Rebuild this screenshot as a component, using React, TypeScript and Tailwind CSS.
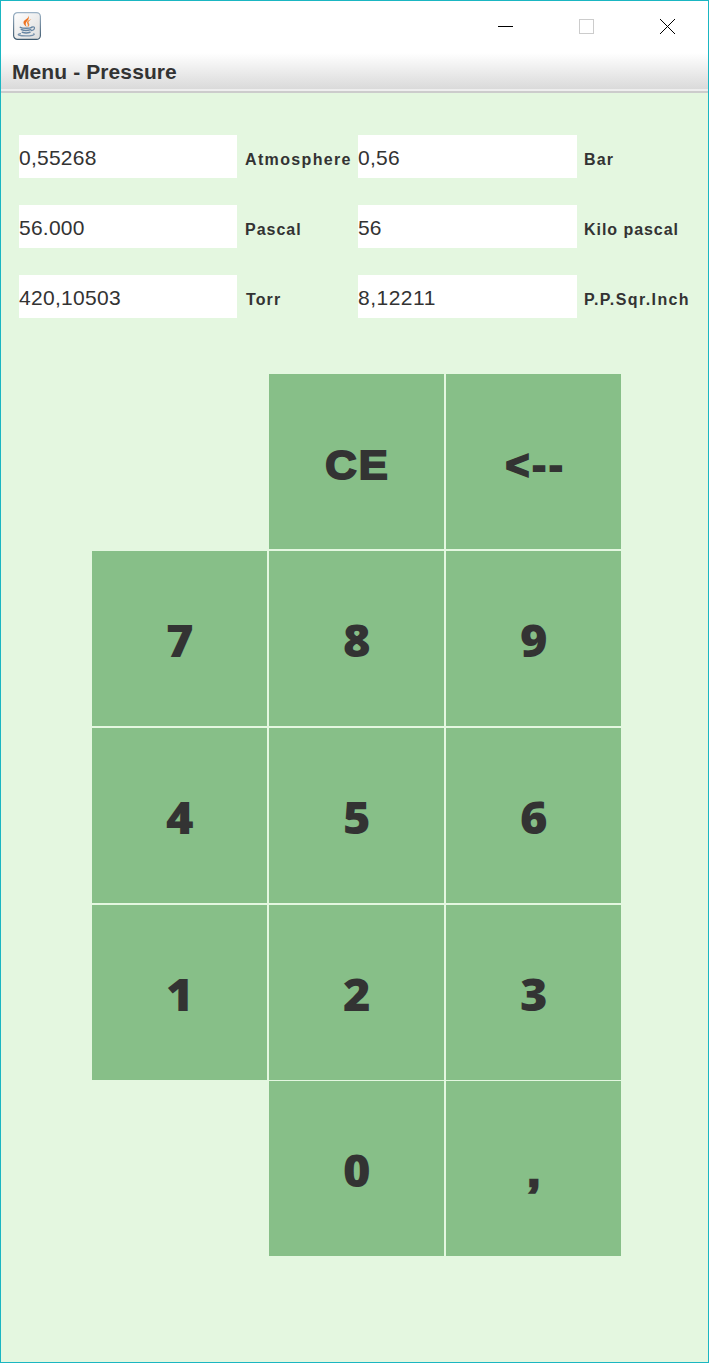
import React from "react";

type Unit = { value: string; label: string; labelClass: string; fieldClass: string };

const units: Unit[] = [
  { value: "0,55268", label: "Atmosphere", labelClass: "pl-2 tracking-[1.35px]", fieldClass: "w-[218px] tracking-[0.25px]" },
  { value: "0,56", label: "Bar", labelClass: "pl-[7px] tracking-[1.1px]", fieldClass: "w-[219px] tracking-[0.25px]" },
  { value: "56.000", label: "Pascal", labelClass: "pl-2 tracking-[1px]", fieldClass: "w-[218px] tracking-[0.25px]" },
  { value: "56", label: "Kilo pascal", labelClass: "pl-[7px] tracking-[0.95px]", fieldClass: "w-[219px] tracking-[0.15px]" },
  { value: "420,10503", label: "Torr", labelClass: "pl-[9px] tracking-[1.1px]", fieldClass: "w-[218px] tracking-[0.3px]" },
  { value: "8,12211", label: "P.P.Sqr.Inch", labelClass: "pl-[7px] tracking-[1.4px]", fieldClass: "w-[219px] tracking-[0.5px]" },
];

const keyRows: string[][] = [
  ["", "CE", "<--"],
  ["7", "8", "9"],
  ["4", "5", "6"],
  ["1", "2", "3"],
  ["", "0", ","],
];

const digitClass = "scale-x-[1.08] font-['Open_Sans','Liberation_Sans',sans-serif] text-[43.5px] font-extrabold";

const symbolClasses: Record<string, string> = {
  CE: "mt-px ml-[2px] scale-x-[1.06] text-[41px] font-bold tracking-[2px] [-webkit-text-stroke:2px_#333]",
  "<--": "mt-px ml-[4px] text-[41px] font-bold tracking-[3px] [-webkit-text-stroke:2px_#333]",
  ",": "mt-px scale-x-[1.1] text-[41px] font-bold [-webkit-text-stroke:2.500px_#333]",
};

function JavaIcon() {
  return (
    <svg width="28" height="28" viewBox="0 0 28 28" className="block">
      <defs>
        <linearGradient id="frame" x1="0" y1="0" x2="0" y2="1">
          <stop offset="0" stopColor="#9db3c6" />
          <stop offset="1" stopColor="#3f5a6f" />
        </linearGradient>
        <linearGradient id="face" x1="0" y1="0" x2="1" y2="1">
          <stop offset="0" stopColor="#ffffff" />
          <stop offset="1" stopColor="#dcdcdc" />
        </linearGradient>
      </defs>
      <rect x="0.6" y="0.6" width="26.8" height="26.8" rx="4" fill="url(#face)" stroke="url(#frame)" strokeWidth="1.2" />
      <path d="M15 3.500C16.500 7 10 7.500 10.500 11c.3 1.800 2 2.700 3.200 4.500C13 13 12.300 12.300 13 10.700c.9-2 4.300-3.600 2-7.200Z" fill="#ee7322" />
      <path d="M18.400 7.200c-3 .6-5 2.300-4.200 4.200.5 1.200 1.200 2 .1 4.100 3-2.200 2-3.400 1.300-4.700-.5-1.100.7-2.200 2.800-3.600Z" fill="#f08a3c" />
      <g fill="none" strokeLinecap="round" stroke="#6685a3">
        <path d="M7.300 15.300c2.500 1.300 9.200 1.300 11.500 0" strokeWidth="1.500" />
        <path d="M19 15c3.600-.9 3.300 3-.8 3.700" strokeWidth="1.200" />
        <path d="M8.300 17.500c2.400 1 6.900.9 9.400.1M9.300 20.200c2.200.8 5.500.8 7.700 0" strokeWidth="1.500" />
        <path d="M7.400 21.600c-4.800.9-.8 2.300 5.400 2.300 5.500 0 9.600-.8 8-2.100" stroke="#7892ac" strokeWidth="1.300" />
      </g>
    </svg>
  );
}

function TitleBar() {
  return (
    <header className="flex h-[52px] shrink-0 items-start justify-between bg-white pl-3 pr-[33px]">
      <div className="pt-[11px]">
        <JavaIcon />
      </div>
      <div className="flex gap-[66px] pt-[18px]">
        <svg width="15" height="15" className="block">
          <rect x="0" y="7" width="15" height="1" fill="#000" />
        </svg>
        <svg width="15" height="15" className="block">
          <rect x="0.5" y="0.5" width="14" height="14" fill="none" stroke="#ccc" />
        </svg>
        <svg width="15" height="15" className="block">
          <path d="M0 0L15 15M15 0L0 15" fill="none" stroke="#000" strokeWidth="1" />
        </svg>
      </div>
    </header>
  );
}

function MenuBar() {
  return (
    <nav className="h-10 shrink-0 border-b-2 border-[#ccc] bg-[#eee]">
      <div className="flex h-9 items-center bg-linear-to-b from-white to-[#dadada] pl-[11px] pt-px text-[21px] leading-6 font-bold tracking-[0.1px]">
        Menu - Pressure
      </div>
    </nav>
  );
}

function UnitField({ value, label, labelClass, fieldClass }: Unit) {
  return (
    <div className="flex h-[43px] items-center">
      <div className={`flex h-full shrink-0 items-center bg-white pt-[3px] text-[21px] leading-6 ${fieldClass}`}>
        {value}
      </div>
      <span className={`pt-[6px] text-[16px] leading-5 font-bold whitespace-nowrap ${labelClass}`}>{label}</span>
    </div>
  );
}

function Key({ label }: { label: string }) {
  if (!label) return <div />;
  return (
    <button className="flex size-[175px] items-start justify-center bg-[#87bf88] pt-[65px]">
      <span className={`block leading-[50px] ${symbolClasses[label] ?? digitClass}`}>{label}</span>
    </button>
  );
}

export default function App() {
  return (
    <div className="flex h-[1363px] w-[709px] flex-col border border-[#1ab6c2] bg-[#e4f7e0] font-['Liberation_Sans',Arial,sans-serif] text-[#333]">
      <TitleBar />
      <MenuBar />
      <section className="mt-[42px] grid grid-cols-[339px_1fr] gap-y-[27px] pl-[18px]">
        {units.map((unit) => (
          <UnitField key={unit.label} {...unit} />
        ))}
      </section>
      <section className="mt-14 ml-[91px] flex flex-col gap-[2px] [&>*:last-child]:-mt-px">
        {keyRows.map((row, i) => (
          <div key={i} className="grid grid-cols-[175px_175px_175px] gap-[2px]">
            {row.map((label, j) => (
              <Key key={j} label={label} />
            ))}
          </div>
        ))}
      </section>
    </div>
  );
}
